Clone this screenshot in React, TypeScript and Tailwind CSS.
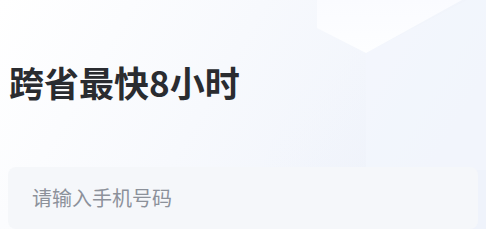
import React from "react";

const font = { fontFamily: '"Noto Sans CJK SC", "Noto Sans", sans-serif' };

function CubeBackdrop() {
  return (
    <svg
      className="absolute inset-0 h-full w-full"
      viewBox="0 0 486 249"
      preserveAspectRatio="none"
      aria-hidden
    >
      <defs>
        <linearGradient id="bg" x1="0" y1="0" x2="1" y2="0.3">
          <stop offset="0" stopColor="#ffffff" />
          <stop offset="0.5" stopColor="#f7f9fd" />
          <stop offset="1" stopColor="#eff3fb" />
        </linearGradient>
        <linearGradient id="top" x1="0" y1="0" x2="0" y2="1">
          <stop offset="0" stopColor="#fafbff" />
          <stop offset="1" stopColor="#fdfeff" />
        </linearGradient>
        <linearGradient id="left" x1="0" y1="0" x2="1" y2="1">
          <stop offset="0" stopColor="#f8fafe" stopOpacity="0" />
          <stop offset="1" stopColor="#eef2fa" />
        </linearGradient>
      </defs>
      <rect width="486" height="249" fill="url(#bg)" />
      <polygon points="317,25 366,53 366,170 260,170" fill="url(#left)" opacity="0.5" />
      <polygon points="366,53 486,-10 486,170 366,170" fill="#f3f6fd" opacity="0.6" />
      <polygon points="317,0 317,28 366,53 462,0" fill="url(#top)" />
    </svg>
  );
}

export default function App() {
  return (
    <div className="relative h-[249px] w-[486px] overflow-hidden bg-white" style={font}>
      <CubeBackdrop />
      <div className="relative flex flex-col px-2">
        <h1 className="mt-[58px] pl-px text-[35px] font-bold leading-[48px] text-[#2a2c30]">
          跨省最快8小时
        </h1>
        <div className="mt-[61px] flex h-[62px] items-center rounded-lg bg-[#f5f7fa] px-6">
          <span className="text-[20px] text-[#8c919a]">请输入手机号码</span>
        </div>
      </div>
      <div className="absolute bottom-0 left-0 h-5 w-full bg-white" />
    </div>
  );
}
